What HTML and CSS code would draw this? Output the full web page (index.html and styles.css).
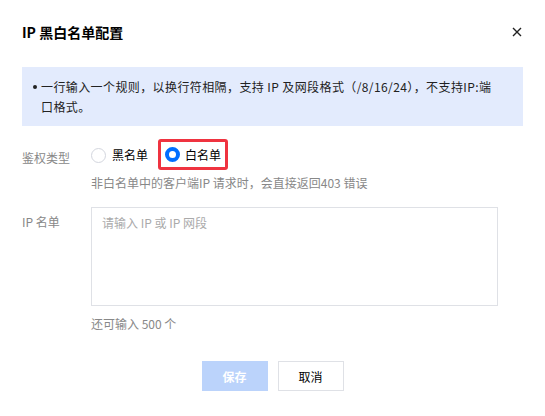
FILE: index.html
```html
<!DOCTYPE html>
<html lang="zh-CN">
<head>
<meta charset="utf-8">
<title>IP 黑白名单配置</title>
<link rel="stylesheet" href="styles.css">
</head>
<body>
<div class="dialog">
  <div class="header">
    <h1 class="title">IP 黑白名单配置</h1>
    <span class="close">
      <svg width="10" height="10" viewBox="0 0 10 10"><path d="M1 1L9 9M9 1L1 9" stroke="#222" stroke-width="1.4" fill="none"/></svg>
    </span>
  </div>
  <div class="notice">
    <ul class="notice-list">
      <li>一行输入一个规则，以换行符相隔，支持 IP 及网段格式（/8/16/24），不支持IP:端口格式。</li>
    </ul>
  </div>
  <div class="form">
    <div class="row row-radio">
      <div class="label">鉴权类型</div>
      <div class="control">
        <div class="radio-group">
          <label class="radio"><span class="dot"></span><span class="radio-text">黑名单</span></label>
          <label class="radio radio-marked"><span class="dot dot-on"></span><span class="radio-text">白名单</span></label>
        </div>
        <div class="hint">非白名单中的客户端IP 请求时，会直接返回403 错误</div>
      </div>
    </div>
    <div class="row row-text">
      <div class="label label-ta">IP 名单</div>
      <div class="control">
        <div class="textarea"><span class="placeholder">请输入 IP 或 IP 网段</span></div>
        <div class="hint hint-count">还可输入 500 个</div>
      </div>
    </div>
  </div>
  <div class="footer">
    <button class="btn btn-primary">保存</button>
    <button class="btn btn-default">取消</button>
  </div>
</div>
</body>
</html>
```

FILE: styles.css
```css
* { box-sizing: border-box; }
html, body { margin: 0; padding: 0; background: #fff; }
body {
  font-family: "Noto Sans CJK SC", "Noto Sans", sans-serif;
  font-size: 12px;
  color: #000;
}
.dialog {
  width: 545px;
  height: 416px;
  padding: 20px 22px 0 22px;
}
.header {
  display: flex;
  justify-content: space-between;
  align-items: center;
  height: 24px;
}
.title {
  margin: 0;
  font-size: 14px;
  font-weight: 700;
  line-height: 24px;
  color: #000;
}
.close {
  display: flex;
  width: 10px;
  height: 10px;
  margin-right: 1px;
}
.notice {
  margin-top: 23px;
  background: #e3ebfd;
  width: 501px;
  padding: 10px 24px 9px 11px;
}
.notice-list {
  margin: 0;
  padding: 0;
  list-style: none;
}
.notice-list li {
  position: relative;
  padding-left: 8px;
  line-height: 20px;
  color: #222;
  letter-spacing: 0.4px;
}
.notice-list li::before {
  content: "";
  position: absolute;
  left: 0;
  top: 8px;
  width: 4px;
  height: 4px;
  border-radius: 50%;
  background: #222;
}
.form {
  margin-top: 12px;
}
.row {
  display: flex;
}
.label {
  width: 69px;
  color: #888;
  line-height: 20px;
  padding-top: 10px;
}
.label-ta { padding-top: 5px; }
.control { flex: 1; }
.radio-group {
  display: flex;
  align-items: center;
  gap: 10px;
  height: 34px;
}
.radio {
  display: flex;
  align-items: center;
  gap: 6px;
  line-height: 20px;
  color: #000;
}
.radio-marked {
  border: 3px solid #ef3340;
  border-radius: 3px;
  padding: 3px 4px 2px 4px;
  margin-top: -2px;
  gap: 5px;
}
.dot {
  width: 15px;
  height: 15px;
  border-radius: 50%;
  border: 1px solid #d3d6de;
  background: #fff;
}
.dot-on {
  border: 4px solid #006eff;
}
.hint {
  color: #888;
  line-height: 20px;
  margin-top: 1px;
}
.row-text {
  margin-top: 14px;
}
.textarea {
  width: 407px;
  height: 99px;
  border: 1px solid #dfe1e6;
  padding: 5px 10px;
  line-height: 20px;
}
.placeholder { color: #aaa; }
.hint-count {
  margin-top: 8px;
}
.footer {
  display: flex;
  justify-content: center;
  gap: 10px;
  margin-top: 27px;
}
.btn {
  width: 66px;
  height: 30px;
  font-family: inherit;
  font-size: 12px;
  border: 1px solid transparent;
  padding: 0;
  cursor: pointer;
}
.btn-primary {
  background: #bbd3fb;
  color: #fff;
  font-weight: 700;
}
.btn-default {
  background: #fff;
  border-color: #dfe1e6;
  color: #000;
}
```
